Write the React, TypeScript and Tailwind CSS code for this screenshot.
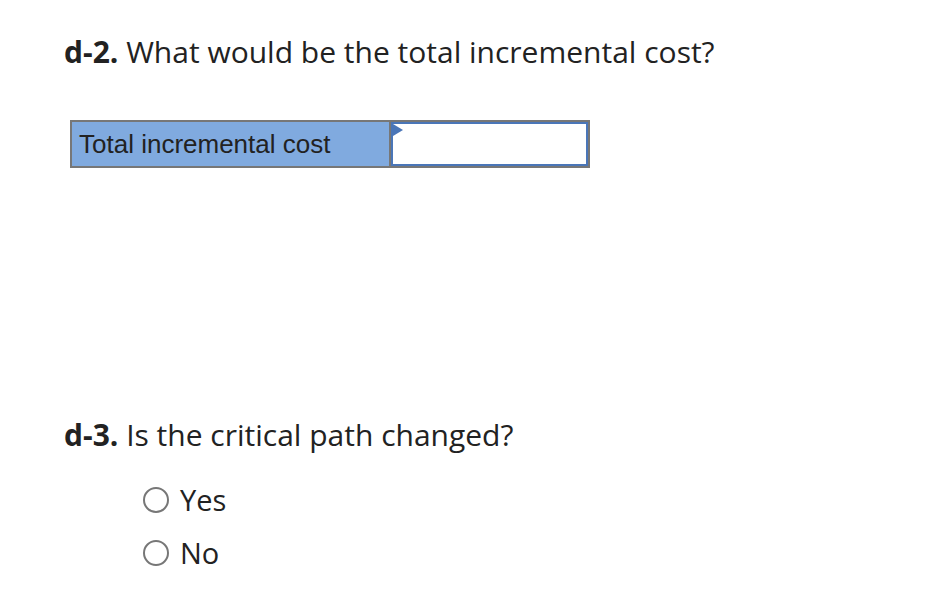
import React from "react";

export default function App() {
  return (
    <div className="w-[932px] h-[598px] bg-white text-[#222] overflow-hidden" style={{ fontFamily: "'Open Sans', Lato, sans-serif" }}>
      <div className="pl-[64px] pt-[34px]">
        <h2 className="text-[30px] leading-[36px] font-normal">
          <span className="font-bold">d-2.</span> What would be the total incremental cost?
        </h2>
        <div className="mt-[50px] ml-[6px] flex w-[520px] h-[48px] border-2 border-[#777] bg-[#777]">
          <div className="w-[317px] bg-[#80aadf] flex items-center pl-[7px] text-[26px] text-[#222]" style={{ fontFamily: "'Liberation Sans', Arial, sans-serif" }}>
            Total incremental cost
          </div>
          <div className="ml-[2px] flex-1 bg-white border-2 border-[#4a76b8] relative">
            <div className="absolute left-0 top-0 w-0 h-0 border-t-[6px] border-b-[6px] border-l-[10px] border-t-transparent border-b-transparent border-l-[#4a76b8]" />
          </div>
        </div>
        <h2 className="mt-[249px] text-[30px] leading-[36px] font-normal">
          <span className="font-bold">d-3.</span> Is the critical path changed?
        </h2>
        <div className="ml-[79px] mt-[31px] flex flex-col gap-[21px]">
          <label className="flex items-center gap-[11px] text-[29px] leading-[32px]">
            <span className="w-[26px] h-[26px] rounded-full border-2 border-[#777] bg-white" />
            Yes
          </label>
          <label className="flex items-center gap-[11px] text-[29px] leading-[32px]">
            <span className="w-[26px] h-[26px] rounded-full border-2 border-[#777] bg-white" />
            No
          </label>
        </div>
      </div>
    </div>
  );
}
